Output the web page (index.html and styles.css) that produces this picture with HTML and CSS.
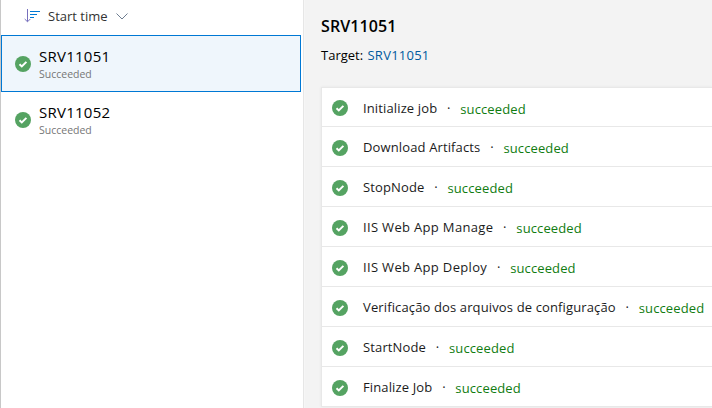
FILE: index.html
```
<!DOCTYPE html>
<html lang="en">
<head>
<meta charset="utf-8">
<title>Deployment jobs</title>
<link rel="stylesheet" href="styles.css">
</head>
<body>
<svg class="defs" aria-hidden="true"><symbol id="ok" viewBox="0 0 16 16"><circle cx="8" cy="8" r="8" fill="#55a362"/><path d="M4.500 8.200l2.300 2.200 4.600-4.500" fill="none" stroke="#fff" stroke-width="2"/></symbol></svg>
<div class="app">
  <aside class="sidebar">
    <div class="sort">
      <svg class="sort-icon" width="17" height="14" viewBox="0 0 17 14" fill="none"><path d="M3.500 0v12.500M.7 10l2.800 2.800L6.300 10" stroke="#7770bd"/><path d="M6 2.500h10M6 5.500h7M6 8.500h4" stroke="#0078d4"/></svg>
      <span class="sort-label">Start time</span>
      <svg class="chevron" width="12" height="7" viewBox="0 0 12 7" fill="none"><path d="M.5.5L6 6 11.500.5" stroke="#6e7d90"/></svg>
    </div>
    <div class="server selected"><svg class="ok"><use href="#ok"/></svg><div><div class="server-name">SRV11051</div><div class="server-state">Succeeded</div></div></div>
    <div class="server"><svg class="ok"><use href="#ok"/></svg><div><div class="server-name">SRV11052</div><div class="server-state">Succeeded</div></div></div>
  </aside>
  <main class="detail">
    <h1>SRV11051</h1>
    <p class="target">Target: <a>SRV11051</a></p>
    <div class="steps">
      <div class="step"><svg class="ok"><use href="#ok"/></svg><span class="name">Initialize job</span><span class="dot">·</span><span class="state">succeeded</span></div>
      <div class="step"><svg class="ok"><use href="#ok"/></svg><span class="name">Download Artifacts</span><span class="dot">·</span><span class="state">succeeded</span></div>
      <div class="step"><svg class="ok"><use href="#ok"/></svg><span class="name">StopNode</span><span class="dot">·</span><span class="state">succeeded</span></div>
      <div class="step"><svg class="ok"><use href="#ok"/></svg><span class="name wide">IIS Web App Manage</span><span class="dot">·</span><span class="state">succeeded</span></div>
      <div class="step"><svg class="ok"><use href="#ok"/></svg><span class="name wide">IIS Web App Deploy</span><span class="dot">·</span><span class="state">succeeded</span></div>
      <div class="step"><svg class="ok"><use href="#ok"/></svg><span class="name">Verificação dos arquivos de configuração</span><span class="dot">·</span><span class="state">succeeded</span></div>
      <div class="step"><svg class="ok"><use href="#ok"/></svg><span class="name">StartNode</span><span class="dot">·</span><span class="state">succeeded</span></div>
      <div class="step"><svg class="ok"><use href="#ok"/></svg><span class="name">Finalize Job</span><span class="dot">·</span><span class="state">succeeded</span></div>
    </div>
  </main>
</div>
</body>
</html>
```
FILE: styles.css
```
* { box-sizing: border-box; }
body { margin: 0; font-family: "Open Sans", "Noto Sans", sans-serif; font-size: 13px; color: #1b1b1b; background: #fff; overflow: hidden; }
.defs { display: none; }
.app { display: flex; height: 408px; }
.sidebar { width: 304px; flex: none; border-left: 1px solid #c8c8c8; border-right: 1px solid #e6e6e6; }
.sort { display: flex; align-items: center; height: 35px; padding: 0 0 3px 23px; color: #333; }
.sort-label { margin: 0 8px 0 7px; white-space: nowrap; }
.server { display: flex; align-items: center; width: 300px; height: 57px; padding-left: 13px; border: 1px solid transparent; }
.server + .server { margin-top: -1px; }
.server.selected { background: #eff6fc; border-color: #0078d4; }
.ok { width: 16px; height: 16px; flex: none; }
.server .ok { margin: 1px 8px 0 0; }
.server-name { font-size: 15px; line-height: 20px; letter-spacing: .25px; color: #000; }
.server-state { font-size: 10.5px; line-height: 15px; color: #767676; position: relative; top: 1px; }
.detail { flex: 1; min-width: 0; background: #f3f3f3; border-left: 1px solid #f6f6f6; padding: 14px 0 0 16px; }
h1 { margin: 0; font-size: 16px; line-height: 24px; font-weight: 600; color: #000; letter-spacing: .1px; }
.target { margin: 7px 0 0; line-height: 20px; color: #000; }
.target a { color: #005a9e; letter-spacing: .25px; margin-left: 1px; }
.steps { margin-top: 22px; border: 1px solid #e8e8e8; border-right: 0; background: #fff; box-shadow: 0 0 3px rgba(0,0,0,.06); }
.step { display: flex; align-items: center; height: 40px; padding: 1px 0 0 10px; border-bottom: 1px solid #e8e8e8; white-space: nowrap; }
.step .ok { margin-top: 2px; }
.step:first-child { height: 39px; }
.step:first-child .ok { margin-top: 1px; }
.step:last-child { height: 39px; border-bottom: 0; }
.name { margin-left: 15px; line-height: 20px; letter-spacing: .13px; }
.name.wide { letter-spacing: .33px; }
.dot { width: 23px; text-align: center; }
.state { color: #107c10; margin-top: 2px; letter-spacing: .12px; }
```
